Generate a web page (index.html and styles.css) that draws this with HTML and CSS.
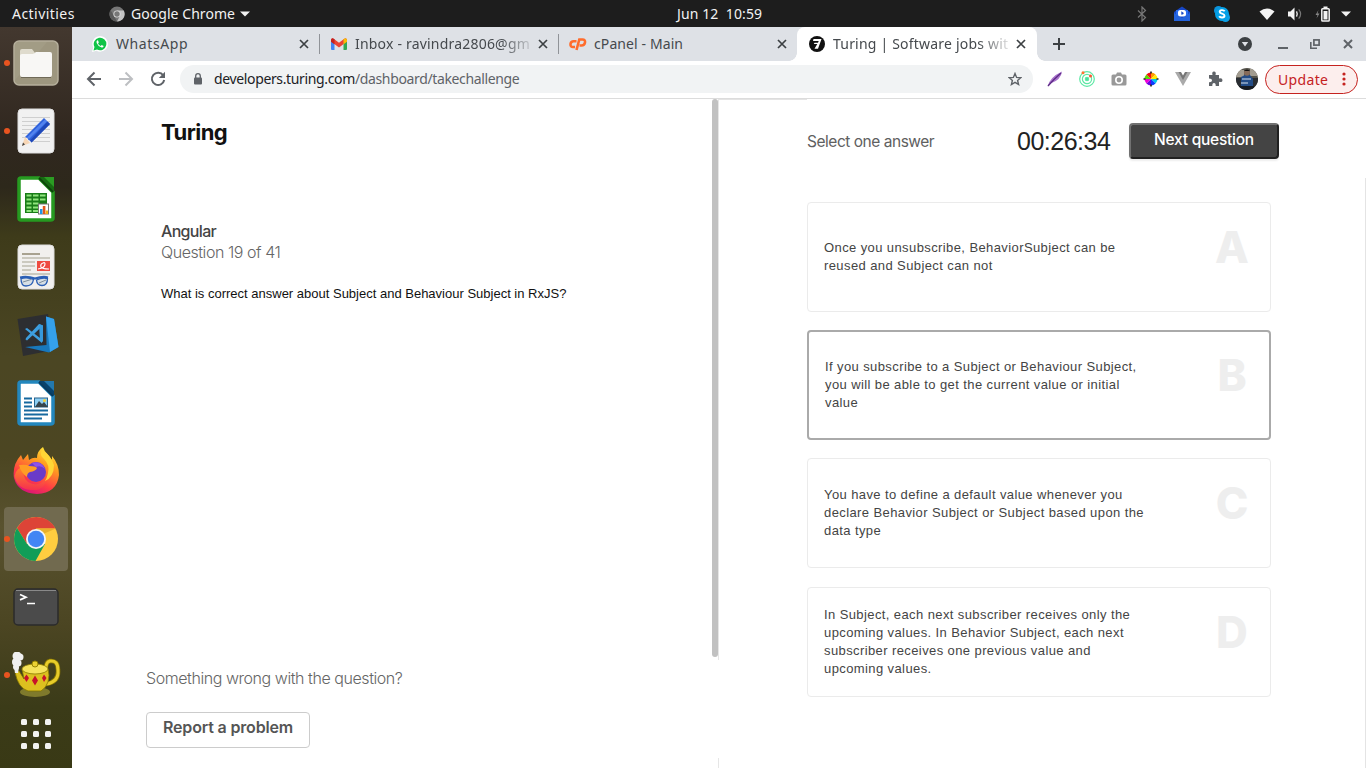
FILE: index.html
```html
<!DOCTYPE html>
<html lang="en">
<head>
<meta charset="utf-8">
<title>Turing | Software jobs</title>
<link rel="stylesheet" href="styles.css">
</head>
<body>
<header class="topbar">
  <span class="t activities">Activities</span>
  <svg class="app-icon" width="16" height="16" viewBox="0 0 16 16"><circle cx="8" cy="8" r="7.500" fill="#777"/><path d="M8 4.500H14.800A7.500 7.500 0 0 1 8 15.500L11 9.800Z" fill="#c4c4c4"/><path d="M1.500 4L5 10 8 15.500A7.500 7.500 0 0 1 1.500 4Z" fill="#5a5a5a"/><circle cx="8" cy="8" r="3.600" fill="#ddd"/><circle cx="8" cy="8" r="2.700" fill="#777"/></svg>
  <span class="t appname">Google Chrome</span>
  <svg class="caret" width="10" height="6" viewBox="0 0 10 6"><path d="M0 .5h10L5 5.500z" fill="#f2f2f2"/></svg>
  <span class="t clock">Jun 12 &nbsp;10:59</span>
  <div class="tray">
    <svg width="10" height="16" viewBox="0 0 10 16" fill="none" stroke="#777" stroke-width="1.200"><path d="M1 4.500L8.500 11.500 5 15V1L8.500 4.500 1 11.500"/></svg>
    <svg class="tray-mail" width="16" height="16" viewBox="0 0 16 16"><path d="M0 6L8 .5 16 6V15H0Z" fill="#1746c4"/><path d="M2 4h12v6H2z" fill="#2a6df0"/><path d="M0 7l8 5 8-5v8H0z" fill="#2463dc"/><rect x="4" y="4" width="8" height="6.500" rx="2.500" fill="#fff"/><path d="M7.300 5.300v3.400q2.500 0 2.500-1.700z" fill="#1746c4"/></svg>
    <svg class="tray-skype" width="16" height="16" viewBox="0 0 16 16"><circle cx="8" cy="8" r="7" fill="#00a5ea"/><circle cx="4.500" cy="4.500" r="4.500" fill="#0b93db"/><circle cx="11.500" cy="11.500" r="4.500" fill="#0b9fe6"/><circle cx="8" cy="8" r="6.300" fill="#049fe6"/><path d="M10.700 5.300C9.500 3.500 5.600 3.700 5.700 5.900 5.800 8 10.500 7.300 10.500 9.700 10.500 12 6.200 12 5.200 10.200" fill="none" stroke="#fff" stroke-width="1.900"/></svg>
    <svg class="tray-wifi" width="16" height="12" viewBox="0 0 16 12"><path d="M.5 3.500Q8-2.500 15.500 3.500L8 12Z" fill="#f3f3f3"/></svg>
    <svg class="tray-vol" width="16" height="14" viewBox="0 0 16 14"><path d="M1 4.500h2.500L7.500.5v13L3.500 9.500H1z" fill="#f3f3f3"/><path d="M9.500 4.300Q11 7 9.500 9.700" fill="none" stroke="#e3e3e3" stroke-width="1.400"/><path d="M11.700 2.300Q15.500 7 11.700 11.700" fill="none" stroke="#777" stroke-width="1.200"/></svg>
    <svg class="tray-bat" width="15" height="16" viewBox="0 0 15 16"><path d="M3.500 4L.5 9h2L1.500 12.500 4.500 7.500h-2z" fill="#888"/><rect x="6.800" y="2.700" width="7.400" height="12.400" rx=".8" fill="none" stroke="#f2f2f2" stroke-width="1.500"/><rect x="8.500" y="5" width="4" height="8.500" fill="#f2f2f2"/><rect x="8.500" y=".5" width="4" height="2" fill="#f2f2f2"/></svg>
    <svg class="tray-caret" width="10" height="6" viewBox="0 0 10 6"><path d="M0 .5h10L5 5.500z" fill="#f2f2f2"/></svg>
  </div>
</header>
<div class="desktop">
<nav class="dock">
  <div class="slot run"><svg width="46" height="46" viewBox="0 0 46 46"><rect x="1" y="1" width="44" height="44" rx="5" fill="#9d967f" stroke="#b5af9c" stroke-width="1.500"/><path d="M2 40L34 2H6Q2 2 2 6z" fill="#a8a18b" opacity=".5"/><path d="M7 13V11q0-2 2-2h10l3 4h-1v6H7z" fill="#dfdbcd"/><path d="M7 15.500q0-1.500 2-1.500h11l3-2h14q2 0 2 2v21q0 2-2 2H9q-2 0-2-2z" fill="#f8f7f5"/><path d="M8 37.500h30" stroke="#6f6957" stroke-width="1"/></svg></div>
  <div class="slot run"><svg width="46" height="46" viewBox="0 0 46 46"><rect x="5" y="1" width="36" height="44" rx="4" fill="#f1f1f1" stroke="#dedede"/><path d="M9 9.500h28M9 13.500h28M9 17.500h28M9 21.500h28M9 25.500h28M9 29.500h28M18 33.500h19" stroke="#cfcfcf"/><path d="M9 38l3-9 5 6z" fill="#f7d6b5"/><path d="M9 38l1-3.500 2 2z" fill="#444"/><path d="M12 29L31 10l6 6-18.500 18.500q-1-2.500-3-2.500-.5-2.500-3.500-3z" fill="#2f62dc"/><path d="M14 29.500L32 11.500l2 2L16 31z" fill="#5283ee"/><path d="M34.500 13.500l2.500 2.500-18.500 18.500-1.500-2z" fill="#1f48b8"/></svg></div>
  <div class="slot"><svg width="46" height="46" viewBox="0 0 46 46"><path d="M8 2H26L40 16V42q0 2-2.500 2H8Q6 44 6 42V4Q6 2 8 2z" fill="#fff" stroke="#269a20" stroke-width="3.500"/><path d="M26 1h12q3 0 3 3v12z" fill="#176b12"/><path d="M31 1h10v10z" fill="#2b9c23"/><path d="M26 2L40 16" stroke="#0c450a" stroke-width="2"/><path d="M12 17h22v20H12z" fill="#197d18"/><g fill="#90e47d"><path d="M13.500 18.500h5v2h-5zM20 18.500h5.500v2H20zM27 18.500h5.500v2H27zM13.500 22.500h5v2h-5zM20 22.500h5.500v2H20zM27 22.500h5.500v2H27zM13.500 26.500h5v2h-5zM20 26.500h5.500v2H20zM13.500 30.500h5v2h-5zM20 30.500h5.500v2H20zM13.500 34h5v2h-5zM20 34h5.500v2H20z"/></g><rect x="25.500" y="28" width="10" height="10" fill="#fff" stroke="#777"/><path d="M27 33h2.500v5H27z" fill="#2196e3"/><path d="M29.800 30h2.600v8h-2.600z" fill="#e2561a"/><path d="M32.700 34.500H35V38h-2.300z" fill="#f3b312"/></svg></div>
  <div class="slot"><svg width="46" height="46" viewBox="0 0 46 46"><rect x="5" y="1" width="36" height="44" rx="4" fill="#f1f0ee" stroke="#ddd"/><path d="M9 10h18" stroke="#a8a290" stroke-width="2"/><path d="M9 14h28M9 18h13M9 22h13M9 26h9M9 30h28" stroke="#cbc9bf" stroke-width="2"/><rect x="24" y="17" width="13" height="10" fill="#ee4b40"/><path d="M25 25q7-1 7-5 0-2-2-1-3 1-2 4 1 2 8 2" fill="none" stroke="#fff" stroke-width="1.200"/><path d="M7 33.500Q14 32 22 34.500 30 32 35 33.500" fill="none" stroke="#2b5fb5" stroke-width="2.200"/><path d="M8 34.500q7-1.500 12.500 1-1 6.500-7.500 6.500-5 0-5-7.500zM23.500 36q5-2.500 11-1.500 0 7-5.500 7-5 0-5.500-5.500z" fill="#d7dfe5" stroke="#2b5fb5" stroke-width="1.300"/><path d="M10 38l8-2.500M26 39l7-3" stroke="#7d8d9b"/></svg></div>
  <div class="slot"><svg width="46" height="46" viewBox="0 0 46 46"><path d="M4.500 7L35 2l6 36-31 6z" fill="#2d2e31"/><path d="M33 4.500L41 7 45.500 35 36 40.500 12 35 33.500 33z" fill="#1878bd"/><path d="M33 4.500l8 2.500 4.500 28-8.500 5z" fill="#35a1eb"/><path d="M12 17l2-1 15 11.500V31zM13 26l13-14 4 1.500L14 28.500l-1.500-1z" fill="#3d9edf"/><path d="M26 12l4 1.500V30l-3-2z" fill="#3799dc"/></svg></div>
  <div class="slot"><svg width="46" height="46" viewBox="0 0 46 46"><path d="M8 2H26L40 16V42q0 2-2.500 2H8Q6 44 6 42V4Q6 2 8 2z" fill="#fff" stroke="#2387bd" stroke-width="3.500"/><path d="M26 1h12q3 0 3 3v12z" fill="#09436c"/><path d="M31 1h10v10z" fill="#2378ad"/><path d="M26 2L40 16" stroke="#09395c" stroke-width="2"/><path d="M11 18.500h8M11 22.500h8M11 26.500h8M11 30.500h24M11 34.500h24M11 38.500h18" stroke="#16699f" stroke-width="1.800"/><rect x="21.500" y="18" width="13" height="9" fill="#8dcff4" stroke="#27638c"/><path d="M22 27l4-6 3 3 2-2 4 5z" fill="#36454d"/><circle cx="31.500" cy="20.500" r="1.500" fill="#f4cf35"/></svg></div>
  <div class="slot"><svg width="46" height="48" viewBox="0 0 46 48"><defs><linearGradient id="fx" x1=".8" y1="0" x2=".3" y2="1"><stop offset="0" stop-color="#fff13b"/><stop offset=".35" stop-color="#ff9a20"/><stop offset=".7" stop-color="#ff3c45"/><stop offset="1" stop-color="#d6127b"/></linearGradient><linearGradient id="fb" x1=".5" y1="0" x2=".4" y2="1"><stop offset="0" stop-color="#ff8a26"/><stop offset="1" stop-color="#f5304f"/></linearGradient></defs><path d="M24 11Q24 4 30 0q1 4 5 8l4 5V9q7 8 7 19Q44 46 24 47 5 46 1 31-1 18 8 8l2 5 5-6 1 6q4-3 8-2z" fill="url(#fx)"/><path d="M12 20q-4 9 3 15 10 6 18-3-1 12-15 11Q4 42 1.500 29q2-9 10.500-9z" fill="url(#fb)"/><circle cx="23" cy="25" r="10" fill="#6a3bc8"/><path d="M19 16q9-3 13 6-4-4-9-2z" fill="#8f52ea"/><path d="M6 18q8-1 10 1 7 0 8 2-1 3-7 4-3 1-3 5-6-4-8-12z" fill="#ff9d25"/><path d="M29 3q-3 5 2 9 6 6 4 14-1 5-3 8 9-4 9-16Q38 8 29 3z" fill="#ffd636"/></svg></div>
  <div class="slot run current"><svg width="46" height="46" viewBox="0 0 46 46"><circle cx="23" cy="23" r="22" fill="#ffcd40"/><path d="M4 12A22 22 0 0 1 42.500 12.500H23L14 28z" fill="#dd4437"/><path d="M4 12A22 22 0 0 0 22.500 45L32 28H14z" fill="#119d58"/><path d="M23 12.500H43L30 18z" fill="#e9b12b"/><circle cx="23" cy="23" r="10" fill="#f4f5f7"/><circle cx="23" cy="23" r="8.200" fill="#4285f4"/></svg></div>
  <div class="slot"><svg width="46" height="46" viewBox="0 0 46 46"><rect x="1" y="5" width="44" height="36" rx="4" fill="#4b4b4b" stroke="#2b2b2b" stroke-width="1.500"/><path d="M3 6.500h40" stroke="#898989"/><path d="M7 10.500l6 2.700-6 2.700M14 19.500h8" fill="none" stroke="#fff" stroke-width="1.700"/></svg></div>
  <div class="slot run"><svg width="50" height="46" viewBox="0 0 50 46"><ellipse cx="24" cy="40" rx="15" ry="5" fill="#a39b35" opacity=".65"/><path d="M35 20q-1-10 4-11 8-1 8 9 1 12-12 14" fill="none" stroke="#8b7900" stroke-width="4.500"/><path d="M35 20q-1-10 4-11 8-1 8 9 1 12-12 14" fill="none" stroke="#e8cc2a" stroke-width="3"/><path d="M4 20l4-1 5 8-2-10h26q2 6 0 13-2 6-7 9H17Q7 36 4 20z" fill="#dcc01f" stroke="#827300" stroke-width=".8"/><ellipse cx="24" cy="17" rx="13" ry="5" fill="#f5e35a" stroke="#8a7a00" stroke-width=".8"/><circle cx="24" cy="12" r="3" fill="#ecd233" stroke="#998500"/><path d="M13 26l2.500-3.500L18 26l-2.500 4zM21 28.500l3-5 3 5-3 5zM31 26l2-3.500 2.500 3.500-2.500 4z" fill="#c7122a"/><g fill="#f0f0f0"><circle cx="6" cy="4" r="4.500"/><circle cx="9" cy="5" r="3.500"/><circle cx="5" cy="10" r="4"/><circle cx="7" cy="11" r="3.500"/><circle cx="5" cy="15" r="3"/><path d="M3 15h5l-1 6H4z"/></g></svg></div>
  <div class="slot grid"><i></i><i></i><i></i><i></i><i></i><i></i><i></i><i></i><i></i></div>
</nav>
<main class="window">
  <div class="tabs">
    <div class="tab tab1"><svg width="18" height="18" viewBox="0 0 18 18"><path d="M1 17L2.200 12.500A7.800 7.800 0 1 1 5.500 15.800z" fill="#fff"/><path d="M2.500 15.500l1-3.500A6.300 6.300 0 1 1 6 14.500z" fill="#10c447"/><path d="M6.300 5.300q-1.300 1-.6 2.700 1.300 3.500 5 4.600 1.500.2 2-1.500l-2-1-1 1q-2-1-2.700-2.700l.8-1-.7-2z" fill="#fff"/></svg><span class="t title t1">WhatsApp</span><svg class="x" width="10" height="10"><path d="M1 1l8 8M9 1L1 9" stroke="#3c4043" stroke-width="1.700"/></svg></div>
    <div class="tab tab2"><svg width="16" height="12" viewBox="0 0 16 12"><path d="M0 1.500h3.500V12H1q-1 0-1-1z" fill="#4285f4"/><path d="M12.500 1.500H16V11q0 1-1 1h-2.500z" fill="#34a853"/><path d="M0 2Q.5-.5 2.700.7L8 4.800 13.300.7Q15.500-.5 16 2v1.500L8 9.500 0 3.500z" fill="#ea4335"/><path d="M12.500 1.300l.8-.6Q15.500-.5 16 2v1.700l-3.500 2.600z" fill="#fbbc04"/><path d="M0 2v1.700l3.500 2.600v-5L2.700.7Q.5-.5 0 2z" fill="#c5221f"/></svg><span class="t title t2 fade">Inbox - ravindra2806@gm</span><svg class="x" width="10" height="10"><path d="M1 1l8 8M9 1L1 9" stroke="#3c4043" stroke-width="1.700"/></svg></div>
    <div class="tab tab3"><svg width="18" height="14" viewBox="0 0 18 14" fill="none" stroke="#ff6c2c" stroke-width="2.600"><path d="M7.500 4.300H4.500Q2 4.300 1.500 7 1.200 10 4 10H6"/><path d="M7.500 13L10.300 2.500H13.500Q16.500 2.500 16 5.500 15.500 8.500 12.500 8.500H10.500"/></svg><span class="t title t3">cPanel - Main</span><svg class="x" width="10" height="10"><path d="M1 1l8 8M9 1L1 9" stroke="#3c4043" stroke-width="1.700"/></svg></div>
    <div class="tab tab4"><svg width="16" height="16" viewBox="0 0 16 16"><circle cx="8" cy="8" r="8" fill="#111"/><path d="M4.500 3H12.500L9 12.800H5.500L8.300 8H4.800L5.500 6.700H9L9.700 5H4z" fill="#fff"/></svg><span class="t title t4 fade">Turing | Software jobs wit</span><svg class="x" width="10" height="10"><path d="M1 1l8 8M9 1L1 9" stroke="#3c4043" stroke-width="1.700"/></svg></div>
    <svg class="plus" width="12" height="12"><path d="M6 0v12M0 6h12" stroke="#3c4043" stroke-width="2"/></svg>
    <div class="winctl">
      <svg width="14" height="14" viewBox="0 0 14 14"><circle cx="7" cy="7" r="7" fill="#3c4043"/><path d="M3.800 5h6.400L7 9.500z" fill="#dee1e6"/></svg>
      <svg width="10" height="10"><path d="M0 9h10" stroke="#5f6368" stroke-width="2"/></svg>
      <svg width="10" height="10" fill="none" stroke="#5f6368"><rect x="3.900" y=".9" width="5.200" height="5.200" stroke-width="1.700"/><path d="M.8 3v6.200H7" stroke-width="1.600"/></svg>
      <svg width="10" height="10"><path d="M1 1l8 8M9 1L1 9" stroke="#5f6368" stroke-width="2"/></svg>
    </div>
  </div>
  <div class="toolbar">
    <div class="navs">
      <svg width="16" height="16" viewBox="0 0 16 16" fill="none" stroke="#5f6368" stroke-width="2"><path d="M15 8H2M8.500 1.500L2 8l6.500 6.500"/></svg>
      <svg width="16" height="16" viewBox="0 0 16 16" fill="none" stroke="#bdbfc2" stroke-width="2"><path d="M1 8h13M7.500 1.500L14 8l-6.500 6.500"/></svg>
      <svg width="16" height="16" viewBox="0 0 16 16"><path d="M13.200 4.300A6.200 6.200 0 1 0 14.200 9" fill="none" stroke="#5f6368" stroke-width="2"/><path d="M15 .8V7H8.800z" fill="#5f6368"/></svg>
    </div>
    <div class="omni">
      <svg width="8" height="12" viewBox="0 0 8 12"><rect y="4.500" width="8" height="7" rx="1" fill="#5f6368"/><path d="M1.700 5V3a2.300 2.300 0 0 1 4.600 0v2" fill="none" stroke="#5f6368" stroke-width="1.300"/></svg>
      <span class="url"><span class="t host">developers.turing.com</span><span class="t path">/dashboard/takechallenge</span></span>
      <svg class="star" width="14" height="14" viewBox="0 0 14 14"><path d="M7 1.500l1.600 3.900 4.200.3-3.200 2.700 1 4.100L7 10.300l-3.600 2.200 1-4.100L1.200 5.700l4.200-.3z" fill="none" stroke="#5f6368" stroke-width="1.400"/></svg>
    </div>
    <div class="exts">
      <svg width="16" height="16" viewBox="0 0 16 16"><path d="M.5 15.500Q3 6 15 .5 14 9 3.500 12.500z" fill="#a873cc"/><path d="M1 15Q7 8 14 2" stroke="#5c2a85" stroke-width="1.300" fill="none"/></svg>
      <svg width="16" height="16" viewBox="0 0 16 16" fill="none" stroke="#5ee8a5" stroke-width="1.200"><circle cx="8" cy="8" r="7.300"/><circle cx="8" cy="8" r="4.600"/><circle cx="8" cy="8" r="1.700" fill="#45df98"/><circle cx="4" cy="1.700" r="1.500" fill="#ff7430" stroke="none"/><circle cx="11.500" cy="5" r="1.500" fill="#ff5330" stroke="none"/></svg>
      <svg width="16" height="14" viewBox="0 0 16 14"><path d="M2 2.500h3L6 .5h4l1 2h3q1.500 0 1.500 1.500v8q0 1.500-1.500 1.500H2Q.5 13.500.5 12V4Q.5 2.500 2 2.500z" fill="#999"/><circle cx="8" cy="8" r="3.200" fill="none" stroke="#fff" stroke-width="1.600"/></svg>
      <svg width="16" height="16" viewBox="-8 -8 16 16"><path d="M0 0V-6.500A6.500 6.500 0 0 1 4.600-4.600z" fill="#ff9a00"/><path d="M0 0L4.600-4.600A6.500 6.500 0 0 1 6.500 0z" fill="#ffee00"/><path d="M0 0H6.500A6.500 6.500 0 0 1 4.600 4.600z" fill="#00c8e8"/><path d="M0 0L4.600 4.600A6.500 6.500 0 0 1 0 6.500z" fill="#0b3cff"/><path d="M0 0V6.500A6.500 6.500 0 0 1-4.600 4.600z" fill="#6d00e0"/><path d="M0 0L-4.600 4.600A6.500 6.500 0 0 1-6.500 0z" fill="#f000d8"/><path d="M0 0H-6.500A6.500 6.500 0 0 1-4.600-4.600z" fill="#5be000"/><path d="M0 0L-4.600-4.600A6.500 6.500 0 0 1 0-6.500z" fill="#f01010"/><path d="M0-7.500v2M0 5.500v2M-7.500 0h2M5.500 0h2" stroke="#222" stroke-width="1.600"/></svg>
      <svg width="16" height="14" viewBox="0 0 16 14"><path d="M0 0h5l3 5 3-5h5L8 14z" fill="#aaa"/><path d="M3.500 0H6l2 3.500L10 0h2.500L8 8z" fill="#777"/></svg>
      <svg width="16" height="16" viewBox="0 0 16 16"><path d="M2 4h3.500q-1-3.500 1.500-3.500T8.500 4H12v3.500q3.500-.8 3.500 1.700T12 10.800V15H8.700q.2-3-1.700-3t-1.700 3H2v-3.800q3 .2 3-1.700T2 7.500z" fill="#5f6368"/></svg>
    </div>
    <svg class="avatar" width="22" height="22" viewBox="0 0 22 22"><defs><clipPath id="av"><circle cx="11" cy="11" r="11"/></clipPath></defs><g clip-path="url(#av)"><rect width="22" height="22" fill="#55534b"/><path d="M0 2h8v7H0zM14 1h8v7h-8z" fill="#a29c90"/><path d="M0 10h5v10H0zM16 10h6v12h-6z" fill="#292d32"/><path d="M5 9l4-2h5l3 4v7H5z" fill="#234c86"/><path d="M6 11h9M5 15h7" stroke="#d5e1ed"/><path d="M3 18h15v4H3z" fill="#161b22"/><circle cx="11" cy="4.700" r="3" fill="#866b59"/><path d="M8 3q3-3 6 0z" fill="#111"/></g></svg>
    <div class="update"><span class="t upd">Update</span><svg width="4" height="14"><circle cx="2" cy="2" r="1.600" fill="#c5221f"/><circle cx="2" cy="7" r="1.600" fill="#c5221f"/><circle cx="2" cy="12" r="1.600" fill="#c5221f"/></svg></div>
  </div>
  <div class="page">
    <section class="left">
      <div class="question">
        <div class="qbody">
          <h1>Turing</h1>
          <div class="subject">Angular</div>
          <div class="count">Question 19 of 41</div>
          <p class="qtext">What is correct answer about Subject and Behaviour Subject in RxJS?</p>
        </div>
        <div class="scroll"></div>
      </div>
      <div class="report">
        <div class="wrong">Something wrong with the question?</div>
        <button class="rbtn">Report a problem</button>
      </div>
    </section>
    <div class="divider"><i></i><b></b></div>
    <section class="right">
      <div class="rhead"><span class="select">Select one answer</span><span class="timer">00:26:34</span><button class="next">Next question</button></div>
      <div class="answers">
        <div class="card"><p>Once you unsubscribe, BehaviorSubject can be<br>reused and Subject can not</p><span class="letter">A</span></div>
        <div class="card chosen"><p>If you subscribe to a Subject or Behaviour Subject,<br>you will be able to get the current value or initial<br>value</p><span class="letter">B</span></div>
        <div class="card"><p>You have to define a default value whenever you<br>declare Behavior Subject or Subject based upon the<br>data type</p><span class="letter">C</span></div>
        <div class="card"><p>In Subject, each next subscriber receives only the<br>upcoming values. In Behavior Subject, each next<br>subscriber receives one previous value and<br>upcoming values.</p><span class="letter">D</span></div>
      </div>
    </section>
    <div class="edge"></div>
  </div>
</main>
</div>
</body>
</html>
```
FILE: styles.css
```css
* { box-sizing: border-box; }
body { margin: 0; width: 1366px; height: 768px; overflow: hidden; display: flex; flex-direction: column; font-family: "Noto Sans", sans-serif; background: #fff; }
svg { display: block; flex: none; }
.t { white-space: nowrap; }
.topbar { height: 27px; background: #1d1d1d; color: #f2f2f2; display: flex; align-items: center; font-size: 14px; flex: none; line-height: 27px; }
.activities { width: 97px; padding-left: 12px; letter-spacing: .45px; }
.app-icon { margin-left: 12px; margin-right: 6px; }
.appname { width: 105px; letter-spacing: .05px; }
.caret { margin-left: 4px; }
.clock { margin-left: 427px; width: 90px; letter-spacing: .1px; padding-bottom: 1px; }
.tray { margin-left: auto; display: flex; align-items: center; padding-right: 15px; }
.tray-mail { margin-left: 27px; }
.tray-skype { margin-left: 24px; }
.tray-wifi { margin-left: 29px; }
.tray-vol { margin-left: 12px; }
.tray-bat { margin-left: 12px; }
.tray-caret { margin-left: 11px; }
.desktop { display: flex; flex: 1; min-height: 0; }
.dock { width: 72px; flex: none; padding: 4px 4px 0; display: flex; flex-direction: column; gap: 4px; background: linear-gradient(180deg, #43382f 0, #30271f 110px, #2d281b 160px, #3e3b1a 210px, #4b4623 330px, #4c4622 430px, #59522f 500px, #4b4522 600px, #3b3b18 680px, #393915 741px); }
.slot { height: 64px; flex: none; border-radius: 4px; display: flex; align-items: center; justify-content: center; position: relative; }
.run::before { content: ""; position: absolute; left: 0; top: 29px; width: 6px; height: 6px; border-radius: 50%; background: #e95420; }
.current { background: #716a4f; }
.grid { height: 46px; display: grid; grid-template-columns: repeat(3, 6px); grid-auto-rows: 6px; gap: 6px; align-content: center; align-items: stretch; }
.grid i { background: #f3f3f1; border-radius: 1.5px; }
.window { flex: 1; min-width: 0; display: flex; flex-direction: column; }
.tabs { height: 34px; background: #dee1e6; display: flex; align-items: center; flex: none; color: #45494d; font-size: 14px; }
.tab { height: 34px; display: flex; align-items: center; }
.title { line-height: 34px; }
.t1 { letter-spacing: .58px; }
.t2 { letter-spacing: .2px; }
.t3 { letter-spacing: .1px; }
.t4 { letter-spacing: .2px; }
.x { margin-left: auto; }
.tab1 { width: 248px; padding: 0 11px 0 19px; }
.tab2 { width: 239px; padding: 0 11px 0 11px; }
.tab3 { width: 238px; padding: 0 10px 0 10px; }
.tab1, .tab2 { background: linear-gradient(#909398, #909398) right center / 1px 20px no-repeat; }
.tab1 .title { margin-left: 7px; }
.tab2 .title { margin-left: 8px; }
.tab3 .title { margin-left: 7px; }
.tab4 { width: 240px; padding: 0 11px 0 12px; background: #fff; border-radius: 8px 8px 0 0; position: relative; }
.tab4 .title { margin-left: 8px; }
.tab4::before, .tab4::after { content: ""; position: absolute; bottom: 0; width: 8px; height: 8px; }
.tab4::before { left: -8px; background: radial-gradient(circle at 0 0, transparent 7.5px, #fff 8px); }
.tab4::after { right: -8px; background: radial-gradient(circle at 8px 0, transparent 7.5px, #fff 8px); }
.fade { -webkit-mask-image: linear-gradient(90deg, #000 145px, rgba(0, 0, 0, .15) 176px); }
.plus { margin-left: 16px; }
.winctl { margin-left: auto; padding-right: 13px; display: flex; align-items: center; gap: 26px; }
.winctl svg:nth-child(3) { margin-left: -4px; }
.winctl svg:nth-child(4) { margin-left: -3px; }
.toolbar { height: 38px; flex: none; border-bottom: 1px solid #dcdcdc; display: flex; align-items: center; background: #fff; padding-bottom: 1px; }
.navs { display: flex; gap: 16px; padding-left: 14px; width: 108px; flex: none; }
.omni { width: 853px; height: 28px; border-radius: 14px; background: #f1f3f4; display: flex; align-items: center; padding: 0 11px 0 14px; font-size: 14px; color: #202124; flex: none; }
.url { margin-left: 12px; white-space: nowrap; letter-spacing: -.36px; padding-bottom: 1px; }
.path { color: #5f6368; }
.star { margin-left: auto; }
.exts { display: flex; align-items: center; gap: 16px; margin-left: 14px; }
.avatar { margin-left: 13px; }
.update { margin-left: 7px; width: 93px; height: 29px; border: 1px solid #c5221f; border-radius: 15px; background: #fceeed; color: #c5221f; display: flex; align-items: center; font-size: 14px; padding-left: 12px; justify-content: space-between; padding-right: 11px; letter-spacing: .35px; }
.page { flex: 1; display: flex; font-family: Inter, sans-serif; min-height: 0; }
.left { width: 646px; flex: none; display: flex; flex-direction: column; }
.question { height: 558px; display: flex; flex: none; }
.qbody { flex: 1; padding-left: 89px; }
.scroll { width: 6px; border-radius: 3px; background: #c1c1c1; }
h1 { margin: 17px 0 0; font-size: 22px; line-height: 32px; font-weight: 700; color: #111; letter-spacing: -.55px; }
.subject { margin-top: 73px; line-height: 21px; font-size: 16px; font-weight: 500; color: #444; letter-spacing: -.68px; }
.count { line-height: 21px; font-size: 16px; font-weight: 300; color: #666; letter-spacing: -.45px; }
.qtext { margin: 21px 0 0; font: 13px/20px "Liberation Sans", Arial, sans-serif; color: #111; }
.report { padding-left: 74px; }
.wrong { margin-top: 11px; line-height: 20px; font-size: 16px; font-weight: 300; color: #666; letter-spacing: -.44px; }
.rbtn { display: block; margin-top: 24px; width: 164px; height: 36px; border: 1px solid #ccc; border-radius: 4px; background: #fff; padding: 0 0 6px; font: 600 16px Inter, sans-serif; color: #555; letter-spacing: -.17px; }
.divider { width: 1px; display: flex; flex-direction: column; justify-content: space-between; flex: none; }
.divider i { height: 561px; background: #e6e6e6; }
.divider b { height: 10px; background: #e6e6e6; }
.right { width: 646px; flex: none; padding-left: 88px; background: linear-gradient(#e4e4e4, #e4e4e4) 0 0 / 88px 1px no-repeat; }
.rhead { padding-top: 24px; height: 103px; display: flex; align-items: flex-start; }
.select { width: 210px; line-height: 38px; font-size: 15.5px; font-weight: 400; color: #606060; letter-spacing: -.47px; }
.timer { font: 25px/36px "Liberation Sans", Arial, sans-serif; letter-spacing: -.5px; color: #222; width: 112px; }
.next { width: 150px; height: 36px; background: #444; border: 2px solid; border-color: #717171 #212121 #212121 #717171; border-radius: 4px; color: #fff; font: 500 15.5px Inter, sans-serif; letter-spacing: -.25px; padding: 0 0 3px; box-shadow: 0 2px 2px #eee; }
.answers { width: 464px; display: flex; flex-direction: column; gap: 18.2px; }
.card { height: 110px; flex: none; border: 1px solid #ebebeb; border-radius: 4px; display: flex; align-items: center; justify-content: space-between; padding: 0 15px 0 16px; }
.chosen { border: 2px solid #aaa; }
.chosen .letter { margin-right: -1px; }
.card p { margin: 0; font: 13px/18px "Liberation Sans", Arial, sans-serif; letter-spacing: .4px; color: #444; white-space: nowrap; }
.letter { width: 46px; text-align: center; font-size: 44px; line-height: 44px; font-weight: 800; color: #eee; padding-bottom: 20px; }
.edge { width: 1px; margin-top: 79px; background: #e4e4e4; }
```
